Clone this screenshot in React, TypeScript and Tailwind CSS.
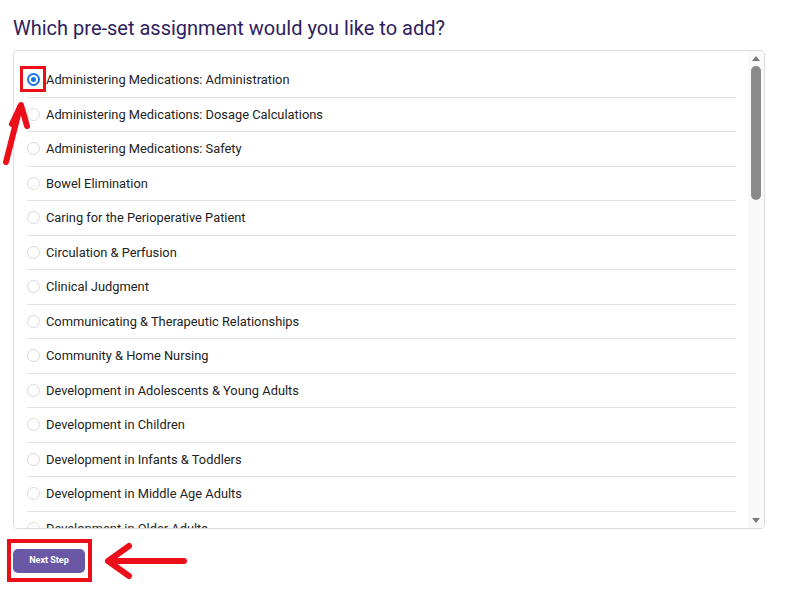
import React from 'react';

const topics = [
  'Administering Medications: Administration',
  'Administering Medications: Dosage Calculations',
  'Administering Medications: Safety',
  'Bowel Elimination',
  'Caring for the Perioperative Patient',
  'Circulation & Perfusion',
  'Clinical Judgment',
  'Communicating & Therapeutic Relationships',
  'Community & Home Nursing',
  'Development in Adolescents & Young Adults',
  'Development in Children',
  'Development in Infants & Toddlers',
  'Development in Middle Age Adults',
  'Development in Older Adults',
  'Documentation',
];

function Radio({ checked }: { checked: boolean }) {
  if (checked) {
    return (
      <span className="flex h-[13px] w-[13px] shrink-0 items-center justify-center rounded-full bg-[#1a73e8]">
        <span className="flex h-[9px] w-[9px] items-center justify-center rounded-full bg-white">
          <span className="h-[5px] w-[5px] rounded-full bg-[#1a73e8]" />
        </span>
      </span>
    );
  }
  return <span className="h-[13px] w-[13px] shrink-0 rounded-full border border-[#d9d9d9] bg-white" />;
}

export default function App() {
  const selected = 0;

  return (
    <div className="relative h-[589px] w-[794px] overflow-hidden bg-white font-['Roboto',sans-serif]">
      <h1 className="pl-[13px] pt-[16px] text-[20px] leading-[24px] text-[#2e2160]">
        Which pre-set assignment would you like to add?
      </h1>

      {/* Assignment list */}
      <div className="mx-[13px] mt-[10px] flex h-[479px] w-[752px] overflow-hidden rounded-[4px] border border-[#dedde3]">
        <div className="flex-1 overflow-hidden pl-[13px] pr-[12px] pt-[12px]">
          {topics.map((t, i) => (
            <div
              key={t}
              className="flex h-[34.5px] items-center gap-[6px] border-b border-[#e2e2e6] text-[12.85px] text-[#222]"
            >
              <Radio checked={i === selected} />
              <span>{t}</span>
            </div>
          ))}
        </div>

        {/* Scrollbar */}
        <div className="flex w-[16px] flex-col items-center bg-[#f9f9f9]">
          <div className="mt-[5px] h-0 w-0 border-x-[4px] border-b-[5px] border-x-transparent border-b-[#7a7a7a]" />
          <div className="mt-[5px] h-[134px] w-[10px] rounded-full bg-[#8a8a8a]" />
          <div className="flex-1" />
          <div className="mb-[5px] h-0 w-0 border-x-[4px] border-t-[5px] border-x-transparent border-t-[#7a7a7a]" />
        </div>
      </div>

      <button className="ml-[13px] mt-[20px] flex h-[24px] w-[72px] items-center justify-center rounded-[5px] bg-[#6a58a6] text-[9px] font-bold text-white">
        Next Step
      </button>

      {/* Annotations */}
      <div className="absolute left-[20px] top-[66px] h-[26px] w-[26px] border-[3px] border-[#ec0f1a]" />
      <div className="absolute left-[7px] top-[539px] h-[43px] w-[85px] border-[4px] border-[#ec0f1a]" />

      <svg className="absolute left-0 top-[96px]" width="40" height="72" viewBox="0 0 40 72">
        <g stroke="#ec0f1a" strokeWidth="6" strokeLinecap="round" strokeLinejoin="round" fill="none">
          <path d="M6 66 L20 11" />
          <path d="M12 28 L21 9 L27 30" />
        </g>
      </svg>

      <svg className="absolute left-[100px] top-[541px]" width="92" height="40" viewBox="0 0 92 40">
        <g stroke="#ec0f1a" strokeWidth="6" strokeLinecap="round" strokeLinejoin="round" fill="none">
          <path d="M84 20 L9 20" />
          <path d="M29 5 L8 20 L29 35" />
        </g>
      </svg>
    </div>
  );
}
